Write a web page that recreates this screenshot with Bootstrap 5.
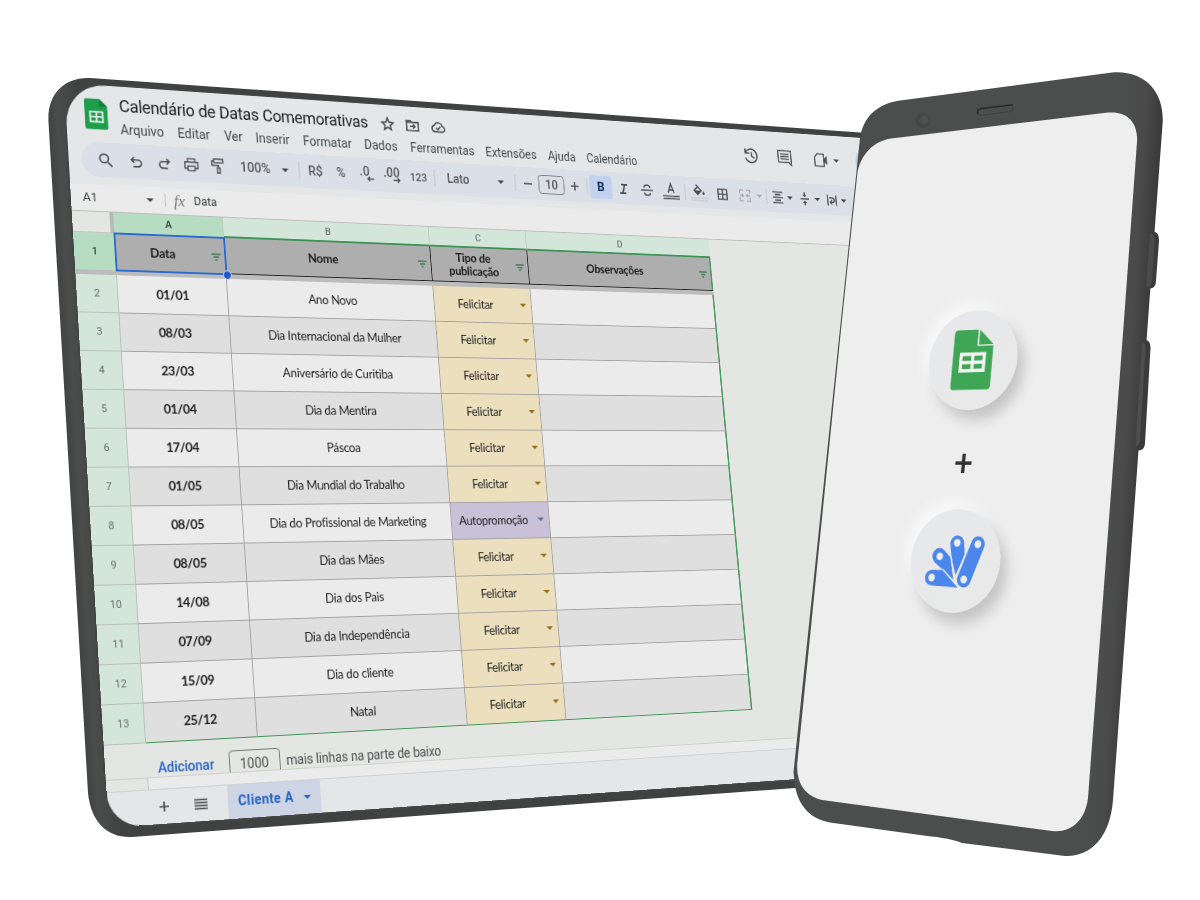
<!DOCTYPE html>
<html lang="pt-BR">
<head>
<meta charset="utf-8">
<meta name="viewport" content="width=device-width, initial-scale=1">
<title>Calendário de Datas Comemorativas</title>
<link href="https://cdn.jsdelivr.net/npm/bootstrap@5.3.0/dist/css/bootstrap.min.css" rel="stylesheet">
<style>
  body { background:#fff; font-family:Roboto,"Liberation Sans",sans-serif; color:#3c4043; }
  .stage { width:1200px; height:900px; }
  .stage > * { position:absolute; left:0; top:0; }
  .plane { transform-origin:0 0; }
  svg { display:block; overflow:visible; flex-shrink:0; }
  .ic { fill:none; stroke:#4b4e50; stroke-width:1.7; }
  .ic .f { fill:#4b4e50; stroke:none; }

  /* spreadsheet */
  .sheet { width:1054px; height:762px; background:#e5e6e8; border-radius:44px 0 0 44px; box-shadow:0 0 0 2px #434444; }
  .head-bar { height:61px; padding-left:19.5px; }
  .doc-logo { width:26px; padding-top:14px; flex-shrink:0; }
  .doc-info { margin-left:12px; width:760px; flex-shrink:0; }
  .doc-title { font-size:18px; line-height:22px; padding-top:10px; color:#1f1f1f; letter-spacing:-.3px; width:297.5px; }
  .menus { display:grid; grid-template-columns:62.5px 52px 35.5px 54.5px 72px 55.3px 92.4px 79px 49.7px 68px; font-size:14px; line-height:18px; padding-top:5px; color:#46494c; }
  .head-tools { padding-top:19px; flex-shrink:0; }
  .share-btn { width:100px; height:40px; border-radius:20px; background:#b7cdec; flex-shrink:0; }

  .tools { height:37px; margin-left:14px; border-radius:18.5px 0 0 18.5px; background:#dbdfe8; font-size:14px; font-weight:500; color:#55585a; display:grid; align-items:center;
    grid-template-columns:26.3px 33px 29.6px 30.4px 29.8px 41.8px 33.8px 16.6px 18.8px 29.9px 30.1px 31.2px 31.3px 19.6px 28.8px 52.9px 18.2px 15.7px 30.5px 30.2px 15.6px 18.2px 30.2px 30.4px 32px 19px 18.9px 32.1px 30.9px 20.2px 9.8px 16.8px 16.7px 21.3px 17.9px 20.7px 17.3px; }
  .tools > * { justify-self:end; transform:translateX(50%); white-space:nowrap; }
  .caret { width:0; height:0; border:4px solid transparent; border-top-color:#444746; border-bottom:0; }
  .sep { width:1px; height:19px; background:#bfc2c9; }
  .size-box { width:33px; height:22px; border:1px solid #747775; border-radius:4px; text-align:center; line-height:20px; }
  .bold-on { width:29px; height:27px; border-radius:4px; background:#c2d2ee; color:#0b2a57; font-weight:700; font-size:15px; text-align:center; line-height:27px; }
  .deci { line-height:16px; width:22px; height:24px; }
  .deci svg { margin-top:-4px; }
  .deci.one { width:16px; }

  .fx-bar { height:28.7px; margin-top:8px; background:#ebebeb; border-bottom:1px solid #bdbdbd; font-size:13px; }
  .name-box { width:101px; padding:0 12px 0 12.5px; }
  .fx-sign { font-family:"Liberation Serif",serif; font-style:italic; font-size:17px; color:#777; width:31px; padding-left:9px; }

  .grid-area { height:580.5px; background:#e4e6e3; overflow:hidden; flex-shrink:0; }
  .g-row { display:grid; grid-template-columns:44px 120px 240px 120px 240px; width:764px; }
  .g-row > * { display:flex; align-items:center; justify-content:center; }
  .letters { height:22.3px; font-size:11px; color:#5d6562; }
  .letters > * { background:#d4e5da; border-right:1px solid #bdc9c1; border-bottom:2px solid #3f9357; padding-top:2.5px; }
  .letters > :first-child { background:#e4e6e3; border-right:4px solid #b8b8b8; border-bottom:1px solid #c6c6c6; }
  .letters > :nth-child(2) { background:#b6dcc2; color:#36433b; font-weight:500; border-bottom-color:#b6dcc2; }
  .letters > :last-child { border-right:0; }
  .titles { height:39px; font:700 13.3px/15px Lato,sans-serif; letter-spacing:-.2px; color:#1c1c1c; }
  .titles > div { background:#aeaeae; border-right:1px solid #222; border-bottom:1.5px solid #222; text-align:center; }
  .titles > div:last-child { border-right:2px solid #4a9a61; }
  .titles > .row-no { background:#b6dcc2; border:0; font:500 11px Roboto; color:#36433b; }
  .titles span { flex:1; padding-left:1px; }
  .titles svg { width:12px; margin:3px 4px 0 1px; }
  .titles > .picked { border:0; outline:2.5px solid #2a6bd0; outline-offset:-1.5px; position:relative; z-index:1; }
  .picked span { padding-right:2px; }
  .handle { position:absolute; right:-5px; bottom:-5px; width:8px; height:8px; border-radius:50%; background:#1a56cc; outline:1px solid #c9d4e8; }
  .freeze { width:764px; height:4.6px; background:#bcbcbc; }
  .day { height:40px; font:400 13.3px Lato,sans-serif; letter-spacing:-.27px; color:#1f1f1f; background:#ebebeb; }
  .day > * { border-right:1px solid #a3a3a3; border-bottom:1px solid #a3a3a3; }
  .day > :last-child { border-right:2px solid #4a9a61; }
  .day.odd { background:#dfdfdf; }
  .row-no { background:#d4e5da !important; font:400 11px Roboto; letter-spacing:0; color:#666d6a; border-color:#b9c0bc !important; }
  .titles > .row-no { background:#b6dcc2 !important; }
  .day .date { font-weight:700; font-size:13.6px; letter-spacing:-.45px; padding-right:1px; }
  .chip { background:#ebdfbe; }
  .chip.own { background:#c8c1d8; }
  .chip span { flex:1; text-align:center; padding-right:5px; }
  .chip.own span { padding-right:3px; }
  .chip i { width:0; height:0; border:4px solid transparent; border-top:4.5px solid #96701a; border-bottom:0; margin-right:6px; }
  .chip.own i { border-top-color:#5d7393; }
  .day.final > :not(.row-no) { border-bottom:1.5px solid #3f9357; }
  .more { padding:12.5px 0 0 55px; font-size:14px; color:#4d5153; line-height:27px; }
  .more b { font-weight:500; width:75.5px; color:#2862c4; }
  .more .count { width:56px; height:30px; border:1px solid #747775; border-radius:4px; text-align:center; margin-right:7px; }
  .more .note { letter-spacing:-.18px; }
  .scroll-x { height:13px; background:#ebebeb; border-top:1px solid #cfd1cf; border-bottom:1px solid #cfd1d3; flex-shrink:0; }
  .scroll-x div { width:44px; height:100%; background:#e4e6e3; border-right:1px solid #c3c5c3; }
  .tabs { height:33.5px; background:#e5e6e8; border-radius:0 0 0 44px; padding-left:39px; }
  .tabs .ico { width:39px; }
  .tab-on { width:102px; background:#cdd5e4; color:#2862c4; font-weight:700; font-size:14px; letter-spacing:.4px; padding-left:11px; margin-left:10px; }
  .tab-on .caret { border-top-color:#2862c4; margin-left:11px; }

  /* phone */
  .phone-face { width:360px; height:760px; padding:213px 0 0 2px; }
  .disc { width:112px; height:112px; border-radius:50%; background:linear-gradient(135deg,#e7e8ea,#e9e9e9); box-shadow:9px 11px 16px rgba(0,0,0,.18), -8px -10px 16px rgba(255,255,255,.6); }
  .plus { font:700 42px/117px Lato,sans-serif; color:#333; height:110px; }
</style>
</head>
<body>
<main class="stage position-relative overflow-hidden">
  <svg width="1200" height="900" viewBox="0 0 1200 900">
    <defs>
      <linearGradient id="tb" gradientUnits="userSpaceOnUse" x1="66" y1="460" x2="100" y2="458"><stop offset="0" stop-color="#3f4040"/><stop offset=".35" stop-color="#4b4c4c"/><stop offset="1" stop-color="#404141"/></linearGradient>
    </defs>
    <path fill="url(#tb)" d="M90 78L860 132.5L940 138V779L795 788L132 837C107 838 91 822 88 793L48.5 122C47 95 63 77 90 78Z"/>
  </svg>

  <section class="plane sheet d-flex flex-column" id="sheet">
    <header class="head-bar d-flex overflow-hidden">
      <div class="doc-logo">
        <svg width="25" height="34" viewBox="0 0 26 34"><path fill="#1c9e4b" d="M2.5 0H17l8.5 8.5V31.5A2.5 2.5 0 0 1 23 34H2.5A2.5 2.5 0 0 1 0 31.5v-29A2.5 2.5 0 0 1 2.500 0z"/><path fill="#137a37" d="M17 0l8.500 8.500H17z"/><path fill="none" stroke="#e5e8e6" stroke-width="2" d="M6 14.500h14v11H6zM6 20h14M13 14.500v11"/></svg>
      </div>
      <div class="doc-info">
        <div class="d-flex">
          <div class="doc-title text-nowrap">Calendário de Datas Comemorativas</div>
          <div class="d-flex" style="padding-top:12px">
            <svg class="ic" width="18" height="18" viewBox="0 0 24 24" style="margin-right:12px;stroke-width:2.200"><path d="M12 3.500l2.500 6 6.500.6-4.900 4.300 1.500 6.300L12 17.300l-5.600 3.400 1.500-6.300L3 10.100l6.500-.6z"/></svg>
            <svg class="ic" width="18" height="18" viewBox="0 0 24 24" style="margin-right:13px;stroke-width:2.200"><path d="M2.500 5h6.500l2 2.500h10.500V20h-19zM2.500 7.500H11M8 13.700h8M12.800 10.500l3.200 3.200-3.200 3.200"/></svg>
            <svg class="ic" width="19" height="18" viewBox="0 0 24 24" style="stroke-width:2.200"><path d="M6.500 19.500a5 5 0 0 1-.6-9.900A6.500 6.500 0 0 1 18.300 11a4.300 4.300 0 0 1 .2 8.500zM8.500 13.500l2.600 2.500 4.400-4.500"/></svg>
          </div>
        </div>
        <nav class="menus text-nowrap"><span>Arquivo</span><span>Editar</span><span>Ver</span><span>Inserir</span><span>Formatar</span><span>Dados</span><span>Ferramentas</span><span>Extensões</span><span>Ajuda</span><span>Calendário</span></nav>
      </div>
      <div class="head-tools d-flex align-items-start">
        <svg class="ic" width="24" height="24" viewBox="0 0 24 24" style="margin:0 23px 0 4px"><path d="M4.300 9A8.200 8.200 0 1 1 4 14.500M4 3.500V9h5.500M12.500 7.500V12.500l4 2.500"/></svg>
        <svg class="ic" width="24" height="24" viewBox="0 0 24 24" style="margin-right:28px"><path d="M3 3.500h18V21l-3.500-3.500H3z"/><path d="M6 7.500h12M6 10.500h12M6 13.500h12"/></svg>
        <svg class="ic" width="24" height="24" viewBox="0 0 24 24"><path d="M7 4.500h9v15H3V8.500z"/><path class="f" d="M16 10.500l4.500-4v11l-4.500-4z"/></svg>
        <div class="caret" style="margin:10px 24px 0 6px"></div>
        <div class="share-btn" style="margin-top:-7px"></div>
      </div>
    </header>

    <div class="tools">
      <svg class="ic" width="20" height="20" viewBox="0 0 24 24"><path class="f" d="M15.500 14h-.79l-.28-.27A6.470 6.470 0 0 0 16 9.500 6.500 6.500 0 1 0 9.500 16c1.610 0 3.090-.59 4.230-1.570l.27.28v.79l5 4.990L20.490 19zm-6 0a4.500 4.500 0 1 1 0-9 4.500 4.500 0 0 1 0 9z"/></svg>
      <svg class="ic" width="18" height="18" viewBox="0 0 24 24" style="stroke-width:2.200"><path d="M8.500 5l-4 4 4 4M4.500 9H14a4.500 4.500 0 0 1 0 9.500H7"/></svg>
      <svg class="ic" width="18" height="18" viewBox="0 0 24 24" style="stroke-width:2.200"><path d="M15.500 5l4 4-4 4M19.500 9H10A4.500 4.500 0 0 0 10 18.500h7"/></svg>
      <svg class="ic" width="19" height="19" viewBox="0 0 24 24"><path d="M7 8V4h10v4M7 17H3V8.500h18V17h-4M7 14h10v6H7z"/></svg>
      <svg class="ic" width="19" height="19" viewBox="0 0 24 24"><path d="M6 2.500h13v5H6zM6 5H3v6h9.500v3.500M10.500 14.500h4v7h-4z"/></svg>
      <span>100%</span><i class="caret"></i><i class="sep"></i>
      <span>R$</span><span>%</span>
      <span class="deci one">.0<svg width="16" height="8" viewBox="0 0 16 8"><path stroke="#4b4e50" stroke-width="1.500" fill="none" d="M17 4.500H9.500M12 2L9.500 4.500 12 7"/></svg></span>
      <span class="deci">.00<svg width="22" height="8" viewBox="0 0 22 8"><path stroke="#4b4e50" stroke-width="1.500" fill="none" d="M12 4.500h7.500M17 2l2.500 2.500L17 7"/></svg></span>
      <span style="font-size:12px">123</span><i class="sep"></i>
      <span>Lato</span><i class="caret"></i><i class="sep"></i>
      <svg class="ic" width="12" height="12" viewBox="0 0 12 12"><path d="M1 6h10"/></svg>
      <span class="size-box">10</span>
      <svg class="ic" width="12" height="12" viewBox="0 0 12 12"><path d="M1 6h10M6 1v10"/></svg>
      <i class="sep"></i>
      <span class="bold-on">B</span>
      <svg class="ic" width="16" height="16" viewBox="0 0 16 16" style="stroke-width:2"><path d="M5 3h8M3 13h8M9.500 3l-3 10"/></svg>
      <svg class="ic" width="18" height="18" viewBox="0 0 18 18"><path d="M1 9h16M13 6C12.500 3.500 11 3 9 3S5 4 5 6M5 12c.5 2.500 2 3 4 3s4-1 4-3"/></svg>
      <svg class="ic" width="22" height="24" viewBox="0 0 22 24"><path d="M7 13.500L11 3l4 10.500M8.300 10.200h5.400"/><path d="M0 17.500h22M0 20.500h22" style="stroke-width:1.400"/></svg>
      <i class="sep"></i>
      <svg class="ic" width="22" height="24" viewBox="0 0 22 24"><path d="M7 2l3 3M9.500 4.500l4.500 4.500-5 4.500-4.500-4.500z"/><path class="f" d="M5 9h9.500L9.500 14zM17 9.500c3 3.500 1 4.500 0 4.500s-3-1 0-4.500z"/><path d="M0 18h22M0 21h22" style="stroke:#c9cbd0;stroke-width:1.500"/></svg>
      <svg class="ic" width="16" height="16" viewBox="0 0 16 16"><path d="M2 2h12v12H2zM8 2v12M2 8h12"/></svg>
      <svg class="ic" width="18" height="18" viewBox="0 0 18 18" style="stroke:#a7aaaf"><path d="M7 2.500H2v4M11 2.500h5v4M7 15.500H2v-4M11 15.500h5v-4M2 9h5M5 7l2 2-2 2M16 9h-5M13 7l-2 2 2 2"/></svg>
      <i class="caret" style="border-top-color:#a7aaaf"></i><i class="sep"></i>
      <svg class="ic" width="16" height="18" viewBox="0 0 16 18"><path d="M1 2.500h14M4 5.700h8M1 9h14M4 12.300h8M1 15.500h14"/></svg>
      <i class="caret"></i>
      <svg class="ic" width="16" height="18" viewBox="0 0 16 18"><path d="M2 9h12M8 1v5M8 17v-5"/><path class="f" d="M5 4h6L8 7zM5 14h6L8 11z"/></svg>
      <i class="caret"></i>
      <svg class="ic" width="16" height="18" viewBox="0 0 16 18"><path d="M2 2.500v13M14 2.500v13M4 6h4.500a2.700 2.700 0 0 1 0 5.500H6M8 9l-2.500 2.500L8 14"/></svg>
      <i class="caret"></i>
    </div>

    <div class="fx-bar d-flex align-items-center">
      <div class="name-box d-flex align-items-center justify-content-between"><span>A1</span><i class="caret"></i></div>
      <i class="sep" style="height:15px"></i>
      <span class="fx-sign">fx</span><span style="font-size:12.500px">Data</span>
    </div>

    <div class="grid-area">
      <div class="g-row letters"><div></div><div>A</div><div>B</div><div>C</div><div>D</div></div>
      <div class="g-row titles" id="titles"><div class="row-no">1</div></div>
      <div class="freeze"></div>
      <div id="days"></div>
      <div class="more d-flex"><b>Adicionar</b><span class="count">1000</span><span class="note">mais linhas na parte de baixo</span></div>
    </div>
    <div class="scroll-x"><div></div></div>
    <footer class="tabs d-flex align-items-stretch">
      <div class="ico d-flex align-items-center justify-content-center"><svg class="ic" width="12" height="12" viewBox="0 0 12 12"><path d="M1 6h10M6 1v10"/></svg></div>
      <div class="ico d-flex align-items-center justify-content-center"><svg class="ic" width="14" height="12" viewBox="0 0 14 12" style="stroke-width:1.500"><path d="M0 1.500h14M0 4.500h14M0 7.500h14M0 10.500h14"/></svg></div>
      <div class="tab-on d-flex align-items-center">Cliente A<i class="caret"></i></div>
    </footer>
  </section>

  <svg width="1200" height="900" viewBox="0 0 1200 900">
    <defs>
      <linearGradient id="pr" gradientUnits="userSpaceOnUse" x1="1108" y1="450" x2="1142" y2="452"><stop offset="0" stop-color="#4c4d4d"/><stop offset=".5" stop-color="#4a4a4a"/><stop offset="1" stop-color="#3a3a3a"/></linearGradient>
    </defs>
    <path fill="#3b3b3b" d="M1154 232C1158 232 1159 236 1159 241L1156 281C1155.500 287 1153 289 1149 288ZM1145 340C1149 340 1150.500 343 1150.500 348L1145 443C1144.500 449 1142 451 1137 450Z"/>
    <path fill="url(#pr)" d="M900 100.500L1112 72.500C1145 70 1164 92 1162.700 122L1149.500 300L1113 800C1110 838 1090 858 1063 855.700L962 843C950 838 935 837 920 835L830 822.500C812 819 799 808 795 786L793.500 772L860 138C863 118 876 104 900 100.500Z"/>
    <path fill="#4b4b4b" d="M1150 234C1154 232 1155 236 1154.500 240L1152 280C1151 286 1149 288 1146 286Z"/>
    <path fill="#4d4e4e" d="M1142 344C1144 342 1146 344 1145.500 349L1140 440C1139 446 1137 447 1135.500 446Z"/>
    <path fill="#eee" d="M891 138.500L1108 112.600C1127 111 1138 122 1137 142L1124 320L1088 798C1085 821 1071 833 1052 831L822 800C805 796 796 783 797.300 763L842 320L857.500 172C861 154 874 141 891 138.500Z"/>
    <circle cx="923" cy="120.500" r="7.500" fill="#474747"/><circle cx="924" cy="120" r="4.500" fill="#4f4f4f"/>
    <path d="M978 114.500C976.500 110 978.500 109 982 108.500L1013 104.800" fill="none" stroke="#2a2a2a" stroke-width="1.600"/><path d="M979 115.500L1010 111.700Q1013 111 1013 106" fill="none" stroke="#404040" stroke-width="1"/>
  </svg>

  <section class="plane phone-face d-flex flex-column align-items-center" id="phone">
    <div class="disc">
      <svg width="112" height="112" viewBox="-56 -56 112 112"><path fill="#3ea655" d="M-21.500-34H4.500V-15.500H24.800V30A4 4 0 0 1 21 33.500H-22A4 4 0 0 1-25.500 30V-30A4 4 0 0 1-21.500-34zM6.500-34L24.800-17H6.500z"/><path fill="none" stroke="#f1f2f1" stroke-width="4" d="M-15-6.500H14.500V12H-15zM-15 2.800H14.500M0-6.500V12"/></svg>
    </div>
    <div class="plus">+</div>
    <div class="disc">
      <svg width="112" height="112" viewBox="-56 -56 112 112"><g transform="translate(.5 .5)"><g fill="#4a86ec"><path d="M-26.500 1.500A8.500 8.500 0 0 1-15-11.500L-6.500-4L-.5 20z"/><path d="M-8-18.500A8.500 8.500 0 0 1 9-20.500L11-8L2 15L-5-3z"/></g><path stroke="#e9e9e9" stroke-width="20" d="M24-12.500L12.600 19.300"/><path stroke="#4a86ec" stroke-width="17" stroke-linecap="round" d="M26.400-19.200L12.600 19.300"/><path fill="#4a86ec" d="M-28 10.300H-15L6 28.200L-28 27.300A8.500 8.500 0 0 1-28 10.300z"/><path stroke="#e9e9e9" stroke-width="1.500" d="M-15 9L7 28M-6-6L1 19"/><g fill="#eee"><circle cx="-28" cy="18.800" r="4.200"/><circle cx="-20" cy="-4.600" r="4.200"/><circle cx=".5" cy="-20" r="4.200"/><circle cx="26.400" cy="-19.200" r="4.200"/><circle cx="12.600" cy="19.300" r="4.200"/></g></g></svg>
    </div>
  </section>
</main>

<script src="https://cdn.jsdelivr.net/npm/bootstrap@5.3.0/dist/js/bootstrap.bundle.min.js"></script>
<script>
  const filter = '<svg height="10" viewBox="0 0 14 10"><path d="M1 1.500h12M3.500 5h7M5.500 8.500h3" stroke="#3c7a50" stroke-width="1.500"/></svg>';
  const titles = document.getElementById('titles');
  ['Data', 'Nome', 'Tipo de<br>publicação', 'Observações'].forEach((t, i) => {
    titles.insertAdjacentHTML('beforeend', `<div class="${i ? '' : 'picked'}"><span>${t}</span>${filter}${i ? '' : '<i class="handle"></i>'}</div>`);
  });
  const days = [['01/01','Ano Novo'],['08/03','Dia Internacional da Mulher'],['23/03','Aniversário de Curitiba'],['01/04','Dia da Mentira'],['17/04','Páscoa'],['01/05','Dia Mundial do Trabalho'],['08/05','Dia do Profissional de Marketing',1],['08/05','Dia das Mães'],['14/08','Dia dos Pais'],['07/09','Dia da Independência'],['15/09','Dia do cliente'],['25/12','Natal']];
  document.getElementById('days').innerHTML = days.map(([d, n, own], i) =>
    `<div class="g-row day ${i % 2 ? 'odd' : ''} ${i === 11 ? 'final' : ''}"><div class="row-no">${i + 2}</div><div class="date">${d}</div><div>${n}</div><div class="chip ${own ? 'own' : ''}"><span>${own ? 'Autopromoção' : 'Felicitar'}</span><i></i></div><div></div></div>`).join('');

  // Perspective: matrix3d that takes four points of a flat panel to four points of the stage
  function project(el, from, to) {
    const m = [];
    from.forEach(([x, y], i) => {
      const [u, v] = to[i];
      m.push([x, y, 1, 0, 0, 0, -x * u, -y * u, u], [0, 0, 0, x, y, 1, -x * v, -y * v, v]);
    });
    for (let c = 0; c < 8; c++) {
      let p = c;
      for (let r = c; r < 8; r++) if (Math.abs(m[r][c]) > Math.abs(m[p][c])) p = r;
      [m[c], m[p]] = [m[p], m[c]];
      for (let r = 0; r < 8; r++) if (r !== c) {
        const k = m[r][c] / m[c][c];
        for (let j = c; j < 9; j++) m[r][j] -= k * m[c][j];
      }
    }
    const [a, b, c, d, e, f, g, h] = m.map((row, i) => row[8] / row[i]);
    el.style.transform = `matrix3d(${[a, d, 0, g, b, e, 0, h, 0, 0, 1, 0, c, f, 0, 1].map(n => n.toFixed(9)).join(',')})`;
  }
  project(document.getElementById('sheet'), [[44, 157], [764, 157], [764, 680.6], [44, 680.6]], [[114.4, 233.4], [710.3, 258], [752.4, 709.5], [146, 743]]);
  project(document.getElementById('phone'), [[0, 0], [360, 0], [360, 760], [0, 760]], [[860, 142], [1139, 109], [1085, 835], [794, 796]]);
</script>
</body>
</html>
